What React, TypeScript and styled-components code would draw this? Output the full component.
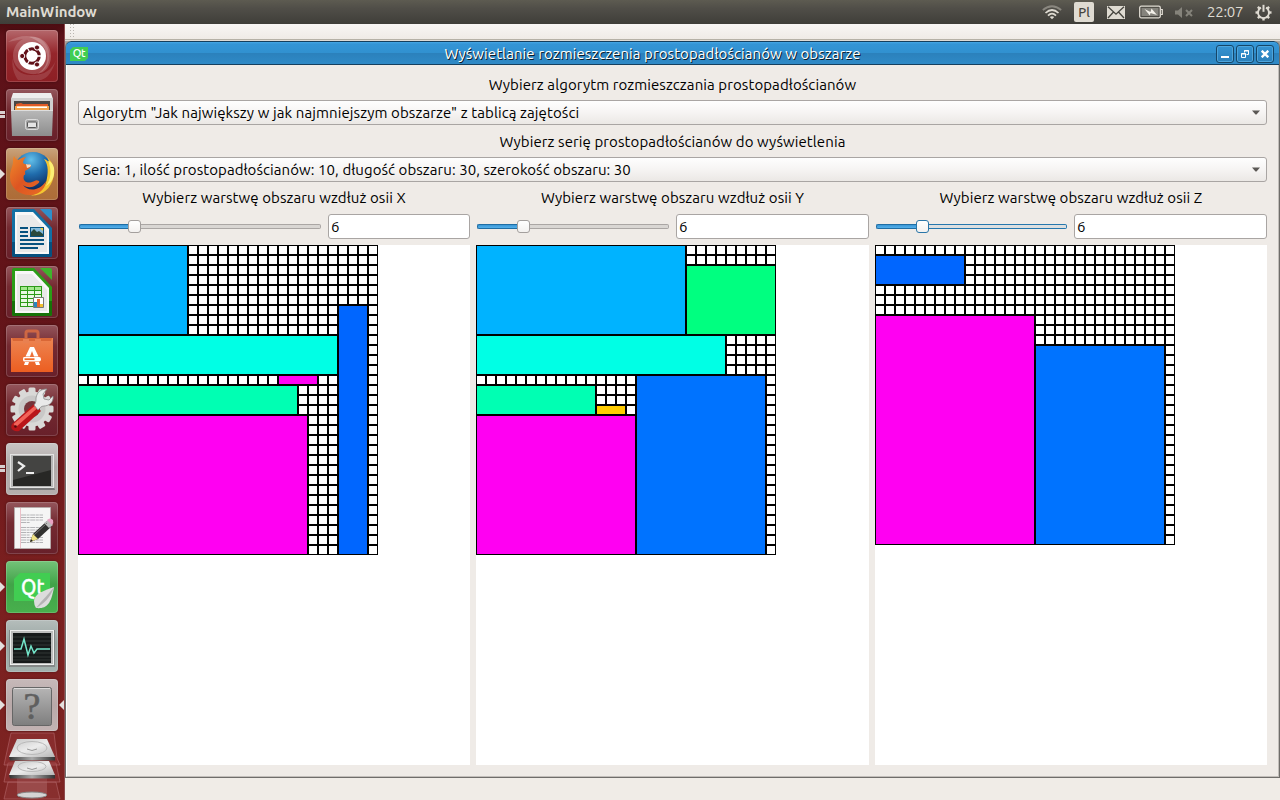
import React from "react";
import styled, { createGlobalStyle, css } from "styled-components";

const GlobalStyle = createGlobalStyle`
  *, *::before, *::after { box-sizing: border-box; }
  html, body { margin: 0; padding: 0; }
  body {
    overflow: hidden;
    font-family: Ubuntu, "Noto Sans", sans-serif;
    font-size: 15px;
    color: #000;
  }
  svg { display: block; }
`;

const Desktop = styled.div`
  display: flex;
  flex-direction: column;
  width: 1280px;
  height: 800px;
  overflow: hidden;
  background: #f0ece7;
`;

/* ---------- top panel ---------- */

const Panel = styled.header`
  flex: none;
  display: flex;
  align-items: center;
  justify-content: space-between;
  height: 24px;
  padding: 0 8px 0 6px;
  background: linear-gradient(#5d5b51, #504e48 35%, #3f3e39);
  color: #dfdbd2;
`;

const PanelTitle = styled.span`
  font-weight: 700;
  font-size: 15px;
  line-height: 24px;
  letter-spacing: -0.1px;
`;

const Indicators = styled.div`
  display: flex;
  align-items: center;
  height: 24px;
`;

const Indicator = styled.span<{ $gap: number }>`
  margin-left: ${(p) => p.$gap}px;
`;

const Layout = styled.span`
  display: block;
  width: 20px;
  height: 20px;
  margin-left: 12px;
  border-radius: 2px;
  background: #dfdbd2;
  color: #45443e;
  font-size: 13px;
  font-weight: 500;
  line-height: 20px;
  text-align: center;
`;

const Clock = styled.span`
  margin-left: 14px;
  width: 36px;
  font-size: 15px;
  line-height: 24px;
  letter-spacing: -0.25px;
  white-space: nowrap;
`;

/* ---------- launcher ---------- */

const Body = styled.div`
  flex: 1;
  display: flex;
  min-height: 0;
`;

const Launcher = styled.nav`
  position: relative;
  flex: none;
  display: flex;
  flex-direction: column;
  gap: 7px;
  width: 65px;
  height: 776px;
  padding: 6px 0 0 6px;
  overflow: hidden;
  border-right: 1px solid #8c4a4c;
  background: linear-gradient(#4c0c11, #5c1118 12px, #651519 45%, #7a1f1f 70%, #7d2422);
`;

const tiles = {
  wine: "linear-gradient(#94565c, #742a31 40%, #68202a)",
  dash: "linear-gradient(#b5686c, #95262b 45%, #8d1f24)",
  firefox: "linear-gradient(#c9a37c, #b4763f 45%, #ad6c38)",
  grey: "linear-gradient(#c9c5c4, #b0aaa9 45%, #b5afae)",
  green: "linear-gradient(#74c279, #41a348 45%, #48b04d)",
  monitor: "linear-gradient(#b5bdbb, #97a5a2 45%, #a3b2ae)",
  unknown: "linear-gradient(#c6b9b9, #b9a9a9 50%, #c2b3b3)",
};
type TileKind = keyof typeof tiles;

const Tile = styled.div<{ $kind: TileKind }>`
  position: relative;
  flex: none;
  width: 52px;
  height: 52px;
  border-radius: 4px;
  background: ${(p) => tiles[p.$kind]};
  box-shadow: inset 0 0 0 1px rgba(255, 255, 255, 0.16), 0 0 3px rgba(0, 0, 0, 0.35);
`;

const pipShape = css`
  position: absolute;
  top: 21px;
  width: 0;
  height: 0;
  border: 5px solid transparent;
`;

const Pip = styled.i<{ $side: "left" | "right" }>`
  ${pipShape}
  ${(p) =>
    p.$side === "left"
      ? "left: -6px; border-left-color: #e4e0de; border-right-width: 0;"
      : "right: -6px; border-right-color: #e4e0de; border-left-width: 0;"}
`;

const DoublePip = styled.i`
  position: absolute;
  top: 22px;
  left: -6px;
  width: 5px;
  height: 7px;
  border: solid #d8cfcf;
  border-width: 3px 0;
`;

const FoldedTiles = styled.div`
  flex: none;
  margin: -6px 0 0 -6px;
`;

/* ---------- application area ---------- */

const Workspace = styled.div`
  flex: 1;
  display: flex;
  flex-direction: column;
  min-width: 0;
`;

const ToolStrip = styled.div`
  flex: none;
  height: 16px;
  padding-left: 5px;
  border-bottom: 1px solid #b5b1a6;
  background: linear-gradient(#f8f6f4, #efebe6);
`;

const Grip = styled.div`
  width: 6px;
  height: 15px;
  background-image: radial-gradient(circle at 0.5px 0.5px, #b9b5b0 0.8px, transparent 0.9px);
  background-size: 3px 3px;
`;

const WindowBack = styled.div`
  flex: none;
  padding-top: 1px;
  background: linear-gradient(#dedad5 0, #dedad5 1px, #a9a5a0 1px, #a9a5a0 8px, #f0ece7 8px);
`;

const Window = styled.section`
  display: flex;
  flex-direction: column;
  height: 737px;
  border: 1px solid #6f6d6a;
  border-top: 0;
  border-radius: 6px 6px 0 0;
  overflow: hidden;
  background: #efebe7;
`;

const TitleBar = styled.div`
  flex: none;
  display: grid;
  grid-template-columns: 20px 1fr 60px;
  align-items: center;
  height: 24px;
  margin: 0 -1px;
  padding: 0 5px 0 5px;
  border: 1px solid #153f5e;
  border-radius: 6px 6px 0 0;
  background: linear-gradient(#46a7e6, #3495d6 2px, #3191d0 48%, #2b81bc 52%, #2f8ac7);
`;

const QtBadge = styled.span`
  display: block;
  width: 18px;
  height: 14px;
  margin-left: -1px;
  background: #41cd52;
  clip-path: polygon(3px 0, 100% 0, 100% 11px, 15px 100%, 0 100%, 0 3px);
  color: #fff;
  font-size: 11px;
  font-weight: 500;
  line-height: 13px;
  letter-spacing: -0.4px;
  text-align: center;
`;

const WindowTitle = styled.h1`
  margin: 0;
  font-size: 15px;
  font-weight: 400;
  line-height: 24px;
  letter-spacing: 0.08px;
  text-align: center;
  white-space: nowrap;
  color: #fff;
  text-shadow: 1px 1px 0 #0b1c29;
`;

const WindowButtons = styled.div`
  display: flex;
  justify-content: flex-end;
  gap: 2px;
`;

const WindowButton = styled.span`
  display: grid;
  place-items: center;
  width: 18px;
  height: 18px;
  border: 1px solid #164668;
  border-radius: 3px;
  box-shadow: inset 0 0 0 1px #4ea5dc;
  background: linear-gradient(#3593d2, #2b80ba);
`;

const Content = styled.main`
  flex: 1;
  display: flex;
  flex-direction: column;
  padding: 10px 11px 0 11px;
  border: solid #fff;
  border-width: 0 1px 1px;
  border-right-color: #c2beba;
  border-bottom-color: #c2beba;
`;

const Label = styled.div`
  height: 20px;
  line-height: 20px;
  text-align: center;
  white-space: nowrap;
  letter-spacing: 0.09px;
`;

const Combo = styled.div<{ $after: number; $track: number }>`
  display: flex;
  align-items: center;
  justify-content: space-between;
  height: 25px;
  margin: 5px 0 ${(p) => p.$after}px;
  padding: 0 6px 0 4px;
  border: 1px solid #a9a5a3;
  border-radius: 3px;
  background: linear-gradient(#fefefe, #f6f4f3 50%, #ebe8e5);
  letter-spacing: ${(p) => p.$track}px;
  white-space: nowrap;
`;

const Columns = styled.div`
  display: grid;
  grid-template-columns: 392px 393px 392px;
  column-gap: 6px;
`;

const Controls = styled.div<{ $sliderWidth: number }>`
  display: grid;
  grid-template-columns: ${(p) => p.$sliderWidth}px 1fr;
  column-gap: 7px;
  height: 25px;
  margin: 6px 0;
  padding-left: 1px;
`;

const Slider = styled.div`
  display: flex;
  align-items: center;
`;

const Filled = styled.div<{ $width: number }>`
  width: ${(p) => p.$width}px;
  height: 5px;
  border: 1px solid #1f6ea5;
  border-right: 0;
  border-radius: 2px 0 0 2px;
  background: linear-gradient(#3a97d6, #55b0ea);
`;

const Handle = styled.div<{ $focus?: boolean }>`
  flex: none;
  width: 13px;
  height: 13px;
  border: 1px solid ${(p) => (p.$focus ? "#2a76a9" : "#a39f9d")};
  border-radius: 3px;
  background: linear-gradient(#fff, #f3f1ef);
`;

const Groove = styled.div<{ $focus?: boolean }>`
  flex: 1;
  height: 5px;
  border: 1px solid ${(p) => (p.$focus ? "#2677ad" : "#aaa6a4")};
  border-left: 0;
  border-radius: 0 2px 2px 0;
  background: ${(p) => (p.$focus ? "#dcdfe0" : "#d9d6d3")};
`;

const Field = styled.div`
  height: 25px;
  padding-left: 2px;
  border: 1px solid #a9a5a3;
  border-radius: 3px;
  background: #fff;
  line-height: 24px;
`;

const View = styled.div`
  height: 520px;
  background: #fff;
`;

const Cells = styled.div<{ $rows: number }>`
  display: grid;
  grid-template-columns: repeat(30, 10px);
  grid-template-rows: repeat(${(p) => p.$rows}, 10px);
  width: 300px;
  background-image:
    linear-gradient(90deg, #000 1px, transparent 1px, transparent 9px, #000 9px),
    linear-gradient(#000 1px, transparent 1px, transparent 9px, #000 9px);
  background-size: 10px 10px;
`;

const Block = styled.div<{ $x: number; $y: number; $w: number; $h: number; $color: string }>`
  grid-column: ${(p) => p.$x + 1} / span ${(p) => p.$w};
  grid-row: ${(p) => p.$y + 1} / span ${(p) => p.$h};
  border: 1px solid #000;
  background: ${(p) => p.$color};
`;

/* ---------- data ---------- */

type BlockData = [x: number, y: number, w: number, h: number, color: string];

interface Axis {
  name: string;
  sliderWidth: number;
  filled: number;
  focus?: boolean;
  rows: number;
  blocks: BlockData[];
}

const axes: Axis[] = [
  {
    name: "X",
    sliderWidth: 242,
    filled: 49,
    rows: 31,
    blocks: [
      [0, 0, 11, 9, "#00b3ff"],
      [0, 9, 26, 4, "#00ffe5"],
      [26, 6, 3, 25, "#0066ff"],
      [20, 13, 4, 1, "#ff00f2"],
      [0, 14, 22, 3, "#00ffb3"],
      [0, 17, 23, 14, "#ff00f2"],
    ],
  },
  {
    name: "Y",
    sliderWidth: 192,
    filled: 40,
    rows: 31,
    blocks: [
      [0, 0, 21, 9, "#00b3ff"],
      [21, 2, 9, 7, "#00ff80"],
      [0, 9, 25, 4, "#00ffe5"],
      [0, 14, 12, 3, "#00ffb3"],
      [12, 16, 3, 1, "#ffcc00"],
      [0, 17, 16, 14, "#ff00f2"],
      [16, 13, 13, 18, "#0073ff"],
    ],
  },
  {
    name: "Z",
    sliderWidth: 191,
    filled: 40,
    focus: true,
    rows: 30,
    blocks: [
      [0, 1, 9, 3, "#0066ff"],
      [0, 7, 16, 23, "#ff00f2"],
      [16, 10, 13, 20, "#0073ff"],
    ],
  },
];

/* ---------- launcher icons ---------- */

const Icon: React.FC<{ children: React.ReactNode }> = ({ children }) => (
  <svg width="52" height="52" viewBox="0 0 52 52">
    {children}
  </svg>
);

const DashIcon = () => (
  <Icon>
    <path d="M2 12C10 6 20 5 29 7c9 2 16 11 14 23-2 10-10 15-18 14C14 43 7 35 7 26c0-8 4-14 10-17" fill="#fff" opacity=".17" />
    <path d="M23 7c13-2 22 8 22 19 0 10-6 17-14 18 9-5 11-13 10-19C39 15 32 10 23 7z" fill="#fff" opacity=".22" />
    <path d="M7 28c0 13 10 18 20 17 11 0 19-5 23-15-4 12-8 18-15 20H12C8 44 5 36 7 28z" fill="#fff" opacity=".13" />
    <circle cx="26" cy="26" r="14" fill="#fff" />
    <circle cx="26" cy="26" r="7.2" fill="none" stroke="#611018" strokeWidth="3.2" />
    <g stroke="#fff" strokeWidth="1.3">
      <path d="M26 26L37 26M26 26L20.500 16.500M26 26L20.500 35.500" />
    </g>
    <g fill="#611018" stroke="#fff" strokeWidth="1">
      <circle cx="16.200" cy="26" r="2.600" />
      <circle cx="31" cy="17.500" r="2.600" />
      <circle cx="31" cy="34.500" r="2.600" />
    </g>
    <circle cx="26" cy="26" r="5.500" fill="#fff" />
  </Icon>
);

const FilesIcon = () => (
  <Icon>
    <defs>
      <linearGradient id="cab" x1="0" y1="0" x2="0" y2="1">
        <stop offset="0" stopColor="#b9b9b9" />
        <stop offset="1" stopColor="#8d8d8d" />
      </linearGradient>
    </defs>
    <path d="M7 4h38l2 6H5z" fill="#ededed" />
    <path d="M5 9h42v12H5z" fill="#cfcfcf" />
    <path d="M8 12h36v10H8z" fill="#4a4744" />
    <path d="M10 15l5-1 2 1h25v7H10z" fill="#e05a26" />
    <path d="M9 17h34v5H9z" fill="#f2a24a" />
    <path d="M11 17.500h30v1.500H11z" fill="#fff" />
    <path d="M5 21h42l-1 26H6z" fill="url(#cab)" />
    <path d="M5 21h42v1H5z" fill="#dedede" />
    <rect x="19.500" y="30.500" width="13" height="10" rx="2" fill="#a7a7a7" stroke="#dcdcdc" />
    <rect x="21.500" y="33" width="9" height="5.500" rx="1" fill="#e4e4e4" stroke="#555" />
  </Icon>
);

const FirefoxIcon = () => (
  <Icon>
    <defs>
      <radialGradient id="globe" cx=".45" cy=".2" r=".75">
        <stop offset="0" stopColor="#62bfe9" />
        <stop offset=".5" stopColor="#206cac" />
        <stop offset="1" stopColor="#0c2c62" />
      </radialGradient>
      <linearGradient id="fox" x1="0" y1="0" x2="1" y2="1">
        <stop offset="0" stopColor="#f08a2b" />
        <stop offset=".5" stopColor="#dd5522" />
        <stop offset="1" stopColor="#e86d25" />
      </linearGradient>
    </defs>
    <circle cx="27" cy="23.500" r="19.500" fill="url(#globe)" />
    <path d="M40 8c7 6 9 13 7.500 21C45 41 36 48 25 47.500c8-2 14-8 15.500-15C42 26 43 17 38 11c3 1 4 2 5 4 0-3-1-5-3-7z" fill="#f4c531" />
    <path d="M42 13c4 9 3 18-2 25 7-4 9-11 8-18-1-4-3-7-6-7z" fill="#fbee74" />
    <path d="M8 8c1 2 2 3 4 4 3-2 6-3 8-3-2 2-3 4-3 6 2 2 5 1 8 2 0 3-3 4-6 6 0 2 1 4-1 4-2 6 3 9 8 7 3-1 4-3 7-1 1 1-1 3-3 4-4 3-9 3-13 0 5 7 17 6 23-4-1 10-9 14-16 14C12 47 4 39 4 29 4 22 7 18 7 14c0-2 0-4 1-6z" fill="url(#fox)" />
    <path d="M20 16c2 1 4 0 5 1 0 2-2 2-4 3z" fill="#f8dbc1" />
  </Icon>
);

const DocumentFrame: React.FC<{ color: string; dark: string; corner: string }> = ({ color, dark, corner }) => (
  <>
    <path d="M6 4q0-2 2-2h20l18 19v27q0 2-2 2H8q-2 0-2-2z" fill={color} />
    <path d="M6 35h40v13q0 2-2 2H8q-2 0-2-2z" fill={dark} />
    <path d="M9 5h18l16 17v25H9z" fill="#f8f8f8" />
    <path d="M11 8h15l15 16v21H11z" fill="#e9e9e9" />
    <path d="M34 2h10q2 0 2 2v10z" fill={corner} />
  </>
);

const WriterIcon = () => (
  <Icon>
    <DocumentFrame color="#1270a4" dark="#06507f" corner="#2f8fca" />
    <g fill="#07527f">
      <path d="M14 20h8v2h-8zM14 24h8v2h-8zM14 28h8v2h-8zM14 32h24v2H14zM14 36h24v2H14zM14 40h18v2H14z" />
      <path d="M24 20h14v10H24z" />
    </g>
    <path d="M25 21h12v8H25z" fill="#85bbdc" />
    <path d="M25 29v-4l3-3 3 3 2-1 4 3v2z" fill="#294a3d" />
    <path d="M34 21h3v3z" fill="#f5cf38" />
  </Icon>
);

const CalcIcon = () => (
  <Icon>
    <DocumentFrame color="#2b9d17" dark="#167208" corner="#3fb42c" />
    <path d="M14 20h22v21H14z" fill="#2d9a18" />
    {[21, 25, 29, 33, 37].map((y) => (
      <g key={y} fill={y === 21 ? "#a4e88e" : "#e9f8e3"}>
        <path d={`M15 ${y}h6v3h-6zM22 ${y}h6v3h-6zM29 ${y}h6v3h-6z`} />
      </g>
    ))}
    <path d="M27.500 31.500h10v10h-10z" fill="#fff" stroke="#777" />
    <path d="M28 36h3v5h-3z" fill="#2b86bd" />
    <path d="M31 33h3v8h-3z" fill="#e8682b" />
    <path d="M34 38h3v3h-3z" fill="#f1bf2f" />
  </Icon>
);

const SoftwareIcon = () => (
  <Icon>
    <defs>
      <linearGradient id="bag" x1="0" y1="0" x2="0" y2="1">
        <stop offset="0" stopColor="#ed8552" />
        <stop offset="1" stopColor="#ec5e21" />
      </linearGradient>
    </defs>
    <path d="M5 13h42v34H5z" fill="url(#bag)" />
    <path d="M6 13h40l-1 3H7z" fill="#cc5527" opacity=".6" />
    <path d="M20 15V8q0-2 2-2h8q2 0 2 2v7" fill="none" stroke="#ce6743" strokeWidth="3" />
    <path d="M17 14h6v4h-6zM29 14h6v4h-6z" fill="#e98050" />
    <path d="M18 40h4l1-3h-4zM34 40h-4l-1-3h4zM24 22h4l4.500 9.500h-4.500L26 26l-2 5.500h-4.500z" fill="#fff" />
    <path d="M18 32h15q2 0 2 2.200t-2 2.200H18q-1 0-1-2.200t1-2.200z" fill="#fff" />
    <path d="M18.500 33.300h10v1.800h-10z" fill="#ef6a2c" />
  </Icon>
);

const SettingsIcon = () => (
  <Icon>
    <g fill="#d9d9d7">
      {[0, 30, 60, 90, 120, 150].map((a) => (
        <rect key={a} x="22.500" y="3.500" width="7" height="43" rx="1.500" transform={`rotate(${a} 26 25)`} />
      ))}
      <circle cx="26" cy="25" r="17.500" />
    </g>
    <circle cx="26" cy="25" r="13.500" fill="#c9c8c7" />
    <circle cx="26" cy="25" r="8" fill="#75343a" />
    <path d="M6 40l22-20 7 7-22 20q-3 1-6-1t-1-6z" fill="#b91519" />
    <path d="M7.500 40l21-18 2.500 2.500L10 43z" fill="#f26359" />
    <path d="M28 21c2-2 2-4 2-7 1-6 5-9 11-9l-4 5 1 5 5 1 4-4c1 6-4 10-9 10-3 0-4 2-6 4z" fill="#e9eaea" stroke="#8c8c8c" strokeWidth=".8" />
    <circle cx="9.500" cy="42.500" r="1.300" fill="#51090c" />
  </Icon>
);

const TerminalIcon = () => (
  <Icon>
    <path d="M3 46l1-2h44l1 3H4z" fill="#777" />
    <path d="M4 11h44v34H4z" fill="#e4e4e3" />
    <path d="M5 12h42v32H5z" fill="#b7b7b6" />
    <path d="M7 13h38v30H7z" fill="#272725" />
    <path d="M7 13h38v14L7 37z" fill="#444442" />
    <path d="M12 19l6 4-6 5" fill="none" stroke="#eee" strokeWidth="2.200" />
    <path d="M20 30h8" stroke="#eee" strokeWidth="2" />
  </Icon>
);

const EditorIcon = () => (
  <Icon>
    <path d="M8.500 5.500h36v41h-36z" fill="#f5f5f5" stroke="#b6aaaa" />
    {[13, 15.500, 18, 20.500, 25.500, 28, 30.500, 33, 35.500, 38, 40.500].map((y, i) => (
      <path key={y} d={`M15 ${y}h${i === 3 || i === 7 ? 9 : 22}`} stroke="#b4b4b7" strokeWidth="1" strokeDasharray="5 .6 3 .6" />
    ))}
    <path d="M14.500 6v40" stroke="#e6a9b4" strokeWidth=".7" />
    <path d="M24 40l3-8 14-13 5 5-14 13z" fill="#30302f" />
    <path d="M24 40l3-8 5 5z" fill="#efe284" />
    <path d="M24 40l1-3 2 2z" fill="#222" />
    <path d="M38 21l4-3 5 5-4 3z" fill="#bdbdbd" />
    <path d="M41 18q3-3 6 0 1 3-1 5z" fill="#e9a4c4" />
    <path d="M28 33l13-12" stroke="#777" strokeWidth="1" />
  </Icon>
);

const QtText = styled.text`
  font-family: Ubuntu, "Noto Sans", sans-serif;
  font-size: 22.5px;
  font-weight: 500;
  fill: #fff;
  stroke: #fff;
  stroke-width: 0.4px;
`;

const QtIcon = () => (
  <Icon>
    <path d="M14 12h30v22l-6 6H8V18z" fill="#41cd52" />
    <QtText x="15" y="33.500" textLength="23.500" lengthAdjust="spacingAndGlyphs">Qt</QtText>
    <path d="M48 26c-9 3-20 7-20 14q0 4 2 7c10 1 15-3 18-21z" fill="#dcdcdc" />
    <path d="M48 26c-5 7-12 13-18 21 7-4 14-9 18-21z" fill="#b3b3b3" />
  </Icon>
);

const MonitorIcon = () => (
  <Icon>
    <path d="M3 10h46v37H3z" fill="#858988" />
    <path d="M4 10h44v35H4z" fill="#eeefee" />
    <path d="M5 11h42v33H5z" fill="#bcbdbc" />
    <path d="M7 13h38v30H7z" fill="#161a1a" />
    {[17, 21, 25, 33, 37, 40].map((y) => (
      <path key={y} d={`M7 ${y}h38`} stroke="#303635" strokeWidth="1" />
    ))}
    <path d="M8 29h7l3-10 4 16 3-9 3 7 3-4h13" fill="none" stroke="#73e6ca" strokeWidth="1.500" />
  </Icon>
);

const QuestionText = styled.text`
  font-family: "Liberation Serif", serif;
  font-size: 38px;
  fill: #5f5f5f;
  stroke: #5f5f5f;
  stroke-width: 0.6px;
`;

const UnknownIcon = () => (
  <Icon>
    <defs>
      <linearGradient id="unk" x1="0" y1="0" x2="0" y2="1">
        <stop offset="0" stopColor="#b6b5b5" />
        <stop offset="1" stopColor="#7e7e7e" />
      </linearGradient>
    </defs>
    <rect x="6.500" y="8.500" width="39" height="38" rx="2" fill="url(#unk)" stroke="#666" />
    <path d="M8 9.500h36" stroke="#dcdada" />
    <QuestionText x="17.500" y="39.500">?</QuestionText>
  </Icon>
);

const StackedDrives = () => (
  <svg width="65" height="68" viewBox="0 0 65 68">
    <defs>
      <linearGradient id="drive" x1="0" y1="0" x2="1" y2="1">
        <stop offset="0" stopColor="#c4c4c4" />
        <stop offset=".5" stopColor="#ececec" />
        <stop offset="1" stopColor="#b5b5b5" />
      </linearGradient>
      <linearGradient id="edge" x1="0" y1="0" x2="1" y2="0">
        <stop offset="0" stopColor="#333" />
        <stop offset=".5" stopColor="#aaa" />
        <stop offset="1" stopColor="#333" />
      </linearGradient>
    </defs>
    <path d="M8 50h48l4 17H4z" fill="#a34a4c" fillOpacity=".3" stroke="#b4686a" strokeOpacity=".6" />
    <path d="M17 46h30v18H17z" fill="#c58a8a" opacity=".3" />
    <ellipse cx="32" cy="63" rx="15" ry="3" fill="#d5d5d5" stroke="#888" />
    <path d="M8 31h48l4 19H4z" fill="#94373a" fillOpacity=".4" stroke="#b4686a" strokeOpacity=".6" />
    <path d="M11 1h43l3 25 3 7H4z" fill="#a04043" fillOpacity=".35" stroke="#b4686a" strokeOpacity=".6" />
    <path d="M15 29h34l6 14H9z" fill="url(#drive)" />
    <ellipse cx="32" cy="34.500" rx="14" ry="5" fill="none" stroke="#b9b9b9" />
    <path d="M27 36q5 3 10 0" fill="none" stroke="#999" />
    <path d="M9 43h46v3.500H10z" fill="url(#edge)" />
    <path d="M17 7h30l8 18H9z" fill="url(#drive)" />
    <ellipse cx="32" cy="16" rx="15" ry="6.500" fill="none" stroke="#b9b9b9" />
    <path d="M27 17q5 3 10 0" fill="none" stroke="#999" />
    <path d="M9 25h46v3.500H10z" fill="url(#edge)" />
  </svg>
);

interface LauncherEntry {
  id: string;
  kind: TileKind;
  icon: React.FC;
  running?: "single" | "double";
  active?: boolean;
}

const launcher: LauncherEntry[] = [
  { id: "dash", kind: "dash", icon: DashIcon },
  { id: "files", kind: "wine", icon: FilesIcon, running: "double" },
  { id: "firefox", kind: "firefox", icon: FirefoxIcon, running: "single" },
  { id: "writer", kind: "wine", icon: WriterIcon },
  { id: "calc", kind: "wine", icon: CalcIcon },
  { id: "software", kind: "wine", icon: SoftwareIcon },
  { id: "settings", kind: "wine", icon: SettingsIcon },
  { id: "terminal", kind: "grey", icon: TerminalIcon, running: "double" },
  { id: "editor", kind: "wine", icon: EditorIcon },
  { id: "qt", kind: "green", icon: QtIcon, running: "single" },
  { id: "monitor", kind: "monitor", icon: MonitorIcon, running: "single" },
  { id: "unknown", kind: "unknown", icon: UnknownIcon, running: "single", active: true },
];

/* ---------- panel icons ---------- */

const WifiIcon = () => (
  <svg width="20" height="16" viewBox="0 0 20 16" fill="none" strokeWidth="1.700">
    <path d="M.8 6Q10-1.500 19.200 6" stroke="#8a877f" />
    <path d="M3.500 9Q10 3 16.500 9" stroke="#dfdbd2" />
    <path d="M6 11.700Q10 7.500 14 11.700" stroke="#dfdbd2" />
    <path d="M7.800 13L10 15.300 12.200 13Q10 11.300 7.800 13z" fill="#dfdbd2" />
  </svg>
);

const MailIcon = () => (
  <svg width="18" height="13" viewBox="0 0 18 13">
    <path d="M0 0h18v13H0z" fill="#dfdbd2" />
    <path d="M1 .8l8 7.400L17 .8M1 12l5.500-6M17 12l-5.500-6" fill="none" stroke="#45443e" strokeWidth="1.300" />
  </svg>
);

const BatteryIcon = () => (
  <svg width="24" height="14" viewBox="0 0 24 14">
    <rect x=".7" y="1.200" width="20.600" height="11.600" rx="1.500" fill="none" stroke="#dfdbd2" strokeWidth="1.300" />
    <path d="M22 4.500h1.300v5H22" fill="none" stroke="#dfdbd2" strokeWidth="1.200" />
    <path d="M2.500 3h17v8h-17z" fill="#85837c" />
    <path d="M5.500 4l6 3 1-3.500L18 10l-6.500-2-.7 2.500z" fill="#f3f0e9" />
  </svg>
);

const MuteIcon = () => (
  <svg width="18" height="13" viewBox="0 0 18 13">
    <path d="M0 4.500h3L7 1v11L3 8.500H0z" fill="#85837b" />
    <path d="M11 4l6 6M17 4l-6 6" stroke="#85837b" strokeWidth="2" />
  </svg>
);

const GearIcon = () => (
  <svg width="17" height="17" viewBox="0 0 17 17">
    <g stroke="#dfdbd2" strokeWidth="2.400">
      {[45, 90, 135, 180, 225, 270, 315].map((a) => (
        <path key={a} d="M8.500 .5v3" transform={`rotate(${a} 8.500 8.500)`} />
      ))}
    </g>
    <path d="M6 3.700A5.500 5.500 0 1 0 11 3.700" fill="none" stroke="#dfdbd2" strokeWidth="1.900" />
    <path d="M8.500 .8v7" stroke="#dfdbd2" strokeWidth="2" />
  </svg>
);

const Arrow = () => (
  <svg width="8" height="5" viewBox="0 0 8 5">
    <path d="M0 .5h8L4.500 4.500h-1z" fill="#5b5855" />
  </svg>
);

const MinimizeGlyph = () => (
  <svg width="8" height="8" viewBox="0 0 8 8">
    <path d="M0 6h8v2H0z" fill="#fff" />
  </svg>
);

const RestoreGlyph = () => (
  <svg width="8" height="8" viewBox="0 0 8 8" fill="none" stroke="#fff">
    <path d="M3.500 2.500v-2h4v4h-2M3 1h5" />
    <path d="M.5 3.500h4v4h-4zM0 4h5" />
  </svg>
);

const CloseGlyph = () => (
  <svg width="8" height="8" viewBox="0 0 8 8">
    <path d="M.7.7l6.600 6.600M7.300.7L.7 7.300" stroke="#fff" strokeWidth="2.300" />
  </svg>
);

export default function App() {
  return (
    <Desktop>
      <GlobalStyle />
      <Panel>
        <PanelTitle>MainWindow</PanelTitle>
        <Indicators>
          <WifiIcon />
          <Layout>Pl</Layout>
          <Indicator $gap={13}><MailIcon /></Indicator>
          <Indicator $gap={14}><BatteryIcon /></Indicator>
          <Indicator $gap={12}><MuteIcon /></Indicator>
          <Clock>22:07</Clock>
          <Indicator $gap={12}><GearIcon /></Indicator>
        </Indicators>
      </Panel>
      <Body>
        <Launcher>
          {launcher.map(({ id, kind, icon: AppIcon, running, active }) => (
            <Tile key={id} $kind={kind}>
              <AppIcon />
              {running === "single" && <Pip $side="left" />}
              {running === "double" && <DoublePip />}
              {active && <Pip $side="right" />}
            </Tile>
          ))}
          <FoldedTiles>
            <StackedDrives />
          </FoldedTiles>
        </Launcher>
        <Workspace>
          <ToolStrip>
            <Grip />
          </ToolStrip>
          <WindowBack>
            <Window>
              <TitleBar>
                <QtBadge>Qt</QtBadge>
                <WindowTitle>Wyświetlanie rozmieszczenia prostopadłościanów w obszarze</WindowTitle>
                <WindowButtons>
                  <WindowButton><MinimizeGlyph /></WindowButton>
                  <WindowButton><RestoreGlyph /></WindowButton>
                  <WindowButton><CloseGlyph /></WindowButton>
                </WindowButtons>
              </TitleBar>
              <Content>
                <Label>Wybierz algorytm rozmieszczania prostopadłościanów</Label>
                <Combo $after={7} $track={0.1}>
                  Algorytm "Jak największy w jak najmniejszym obszarze" z tablicą zajętości
                  <Arrow />
                </Combo>
                <Label>Wybierz serię prostopadłościanów do wyświetlenia</Label>
                <Combo $after={6} $track={0.07}>
                  Seria: 1, ilość prostopadłościanów: 10, długość obszaru: 30, szerokość obszaru: 30
                  <Arrow />
                </Combo>
                <Columns>
                  {axes.map((axis) => (
                    <div key={axis.name}>
                      <Label>Wybierz warstwę obszaru wzdłuż osii {axis.name}</Label>
                      <Controls $sliderWidth={axis.sliderWidth}>
                        <Slider>
                          <Filled $width={axis.filled} />
                          <Handle $focus={axis.focus} />
                          <Groove $focus={axis.focus} />
                        </Slider>
                        <Field>6</Field>
                      </Controls>
                      <View>
                        <Cells $rows={axis.rows}>
                          {axis.blocks.map(([x, y, w, h, color]) => (
                            <Block key={`${x}-${y}`} $x={x} $y={y} $w={w} $h={h} $color={color} />
                          ))}
                        </Cells>
                      </View>
                    </div>
                  ))}
                </Columns>
              </Content>
            </Window>
          </WindowBack>
        </Workspace>
      </Body>
    </Desktop>
  );
}
